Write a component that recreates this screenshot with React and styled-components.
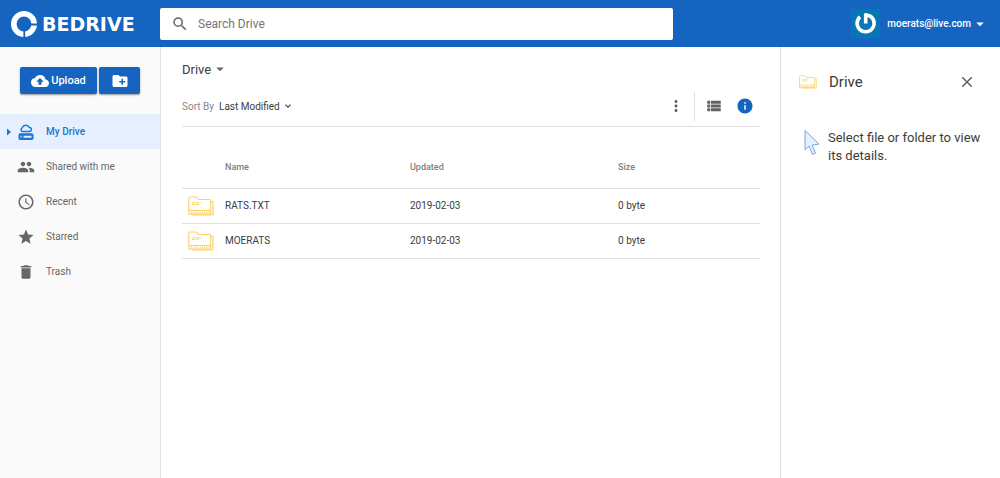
import React, { useState } from "react";
import styled, { createGlobalStyle } from "styled-components";
import {
  MdSearch,
  MdBackup,
  MdCreateNewFolder,
  MdPeople,
  MdAccessTime,
  MdStar,
  MdDelete,
  MdMoreVert,
  MdViewList,
  MdInfo,
  MdClose,
  MdArrowDropDown,
  MdExpandMore,
} from "react-icons/md";

const GlobalStyle = createGlobalStyle`
  * {
    box-sizing: border-box;
  }
  body {
    margin: 0;
    background-color: white;
    color: #3c3c3c;
    font-family: Roboto, "Liberation Sans", sans-serif;
    font-size: 10px;
  }
  button, input, select {
    font-family: inherit;
    color: inherit;
    border: none;
    padding: 0;
    background: none;
  }
  button {
    cursor: pointer;
  }
  svg {
    display: block;
    flex-shrink: 0;
  }
`;

const Page = styled.div`
  min-height: 100vh;
  display: flex;
  flex-direction: column;
`;

/* header */
const Header = styled.header`
  height: 47px;
  display: grid;
  grid-template-columns: 160px minmax(0, 513px) 1fr;
  align-items: center;
  background-color: #1565c0;
  color: white;
`;
const Logo = styled.a`
  display: flex;
  align-items: center;
  gap: 3px;
  padding-left: 11px;
  color: white;
  text-decoration: none;
  font-family: "DejaVu Sans", sans-serif;
  font-size: 19px;
  font-weight: bold;
  line-height: 24px;
`;
const SearchBox = styled.label`
  height: 32px;
  display: flex;
  align-items: center;
  gap: 9px;
  padding-left: 11px;
  background-color: white;
  border-radius: 2px;
  color: #666;
`;
const SearchInput = styled.input`
  flex: 1;
  min-width: 0;
  height: 100%;
  font-size: 12px;
  outline: none;
  &::placeholder {
    color: #757575;
    opacity: 1;
  }
`;
const UserButton = styled.button`
  justify-self: end;
  display: flex;
  align-items: center;
  margin-right: 11px;
  font-size: 10px;
  font-weight: 500;
  color: white;
`;
const UserName = styled.span`
  margin-left: 7px;
`;

/* body */
const Body = styled.div`
  flex: 1;
  display: grid;
  grid-template-columns: 161px minmax(0, 1fr) 220px;
`;
const Sidebar = styled.aside`
  background-color: #fafafa;
  border-right: 1px solid #e0e0e0;
`;
const Actions = styled.div`
  display: flex;
  gap: 2px;
  padding: 20px 20px;
`;
const ActionButton = styled.button`
  height: 27px;
  flex: ${(props) => (props.$wide ? "1" : "0 0 41px")};
  display: flex;
  align-items: center;
  justify-content: center;
  gap: 2px;
  border-radius: 2px;
  background-color: #1565c0;
  box-shadow: 0 1px 2px rgba(0, 0, 0, 0.4);
  color: white;
  font-size: 11px;
  font-weight: 500;
`;
const NavItem = styled.a`
  height: 35px;
  display: flex;
  align-items: center;
  padding-left: 5px;
  text-decoration: none;
  font-size: 10px;
  font-weight: ${(props) => (props.$active ? 500 : 400)};
  color: ${(props) => (props.$active ? "#1976d2" : "#666")};
  background-color: ${(props) => (props.$active ? "#e6effd" : "transparent")};
`;
const NavArrow = styled.span`
  width: 8px;
  margin-right: 4px;
`;
const NavLabel = styled.span`
  margin-left: 11px;
`;

const Content = styled.main`
  padding: 12px 20px 0 21px;
`;
const Breadcrumb = styled.button`
  height: 20px;
  display: flex;
  align-items: center;
  font-size: 13px;
`;
const Toolbar = styled.div`
  height: 48px;
  display: flex;
  align-items: center;
  justify-content: space-between;
  padding-top: 7px;
  border-bottom: 1px solid #e0e0e0;
`;
const Sort = styled.div`
  display: flex;
  align-items: center;
  gap: 5px;
`;
const SortLabel = styled.label`
  color: #8a8a8a;
`;
const SortSelect = styled.select`
  appearance: none;
  font-size: 10px;
`;
const SortField = styled.span`
  display: flex;
  align-items: center;
  gap: 2px;
`;
const Tools = styled.div`
  display: flex;
  align-items: center;
  color: #616161;
`;
const IconButton = styled.button`
  width: ${(props) => props.$width || 31}px;
  height: 28px;
  display: flex;
  align-items: center;
  justify-content: center;
  color: ${(props) => (props.$active ? "#1565c0" : "#616161")};
`;
const Divider = styled.span`
  width: 1px;
  height: 29px;
  margin-left: 3px;
  margin-right: 3px;
  background-color: #e0e0e0;
`;

const FileTable = styled.table`
  width: 100%;
  margin-top: 20px;
  border-collapse: collapse;
  table-layout: fixed;
  text-align: left;
  tr {
    border-bottom: 1px solid #e0e0e0;
  }
`;
const Th = styled.th`
  width: ${(props) => props.$width};
  height: 41px;
  padding: 0;
  font-size: 9px;
  font-weight: 500;
  color: #808080;
`;
const Td = styled.td`
  height: 35px;
  padding: 0;
  font-size: 10px;
`;
const IconCell = styled(Td)`
  padding-left: 6px;
`;

const Details = styled.aside`
  border-left: 1px solid #e0e0e0;
  padding: 23px 12px 0 18px;
`;
const DetailsHead = styled.div`
  height: 24px;
  display: flex;
  align-items: center;
  gap: 12px;
  padding-right: 12px;
`;
const DetailsTitle = styled.h2`
  flex: 1;
  margin: 0;
  font-size: 15px;
  font-weight: 400;
`;
const Hint = styled.div`
  display: flex;
  gap: 8px;
  margin-top: 35px;
  padding-left: 5px;
`;
const HintText = styled.p`
  margin: 0;
  font-size: 13px;
  line-height: 18px;
`;

const LogoMark = () => (
  <svg width="28" height="28" viewBox="0 0 28 28" fill="none" aria-hidden="true">
    <circle cx="13" cy="14" r="10.2" stroke="white" strokeWidth="5.600" />
    <path d="M17 14.500H28M13.300 18V28" stroke="#1565c0" strokeWidth="1.800" />
  </svg>
);

const Avatar = () => (
  <svg width="29" height="29" viewBox="0 0 29 29" fill="none" aria-hidden="true">
    <rect width="29" height="29" fill="#0577b5" />
    <path
      d="M9 7.900A8.500 8.500 0 1 0 18.800 6.900L14.700 5.800V14.500"
      stroke="white"
      strokeWidth="3.600"
      strokeLinejoin="round"
    />
  </svg>
);

const DriveIcon = () => (
  <svg width="18" height="18" viewBox="0 0 18 18" fill="none" aria-hidden="true">
    <path
      d="M5.200 8.600A2.200 2.200 0 0 1 5.200 4.800A3.900 3.900 0 0 1 12.300 4.500A2.100 2.100 0 0 1 13 8.600Z"
      stroke="#1976d2"
      strokeWidth="1.500"
    />
    <rect x="1.500" y="10.300" width="15" height="6.700" rx="1.800" fill="#1976d2" />
    <path d="M3.500 13.700H4.500M6.500 13.700H14.500" stroke="#e6effd" strokeWidth="2" />
  </svg>
);

const FolderIcon = ({ width = 26 }) => (
  <svg width={width} height={(width * 20) / 26} viewBox="0 0 26 20" fill="none" aria-hidden="true">
    <g stroke="#ffd269">
      <path d="M.8 17.500V2.200Q.8 1 2 1H7.500Q8.500 1 9.300 2L10.500 3.500H21.500Q22.700 3.500 22.700 4.700V18.200H1.500Q.8 18.200.8 17.500Z" strokeWidth="1.200" />
      <path d="M22.700 5.500H25V19H4" strokeWidth="1.200" />
      <path d="M1 14.500H22" strokeWidth="1.100" />
      <path d="M3 16.500H22" strokeWidth="2.200" strokeDasharray="1 1.200" />
      <path d="M4 6.800H13M4 8.600H7M8 8.600H11" strokeWidth="1" />
    </g>
  </svg>
);

const CursorIcon = () => (
  <svg width="16" height="26" viewBox="0 0 16 26" aria-hidden="true">
    <path
      d="M1 5V24.500L5 20.600L8.500 29L11.500 27.500L8.200 19.600L15 18.600Z"
      transform="translate(0 -3.500)"
      fill="#e3f0fd"
      stroke="#7ba6d8"
      strokeWidth="1"
      strokeLinejoin="round"
    />
  </svg>
);

const navItems = [
  { label: "My Drive", icon: <DriveIcon />, active: true },
  { label: "Shared with me", icon: <MdPeople size={18} /> },
  { label: "Recent", icon: <MdAccessTime size={18} /> },
  { label: "Starred", icon: <MdStar size={18} /> },
  { label: "Trash", icon: <MdDelete size={18} /> },
];

const files = [
  { name: "RATS.TXT", updated: "2019-02-03", size: "0 byte" },
  { name: "MOERATS", updated: "2019-02-03", size: "0 byte" },
];

const App = () => {
  const [query, setQuery] = useState("");

  return (
    <Page>
      <GlobalStyle />
      <Header>
        <Logo href="#">
          <LogoMark />
          BEDRIVE
        </Logo>
        <SearchBox>
          <MdSearch size={18} />
          <SearchInput
            type="text"
            aria-label="Search Drive"
            placeholder="Search Drive"
            value={query}
            onChange={(e) => setQuery(e.target.value)}
          />
        </SearchBox>
        <UserButton>
          <Avatar />
          <UserName>moerats@live.com</UserName>
          <MdArrowDropDown size={18} />
        </UserButton>
      </Header>
      <Body>
        <Sidebar>
          <Actions>
            <ActionButton $wide>
              <MdBackup size={18} />
              Upload
            </ActionButton>
            <ActionButton aria-label="New folder">
              <MdCreateNewFolder size={18} />
            </ActionButton>
          </Actions>
          <nav>
            {navItems.map((item) => (
              <NavItem key={item.label} href="#" $active={item.active}>
                <NavArrow>
                  {item.active && (
                    <svg width="8" height="8" viewBox="0 0 8 8" aria-hidden="true">
                      <path d="M2 0.500L6 4L2 7.500Z" fill="#1976d2" />
                    </svg>
                  )}
                </NavArrow>
                {item.icon}
                <NavLabel>{item.label}</NavLabel>
              </NavItem>
            ))}
          </nav>
        </Sidebar>
        <Content>
          <Breadcrumb>
            Drive
            <MdArrowDropDown size={18} color="#666" />
          </Breadcrumb>
          <Toolbar>
            <Sort>
              <SortLabel htmlFor="sort">Sort By</SortLabel>
              <SortField>
                <SortSelect id="sort">
                  <option>Last Modified</option>
                </SortSelect>
                <MdExpandMore size={12} />
              </SortField>
            </Sort>
            <Tools>
              <IconButton aria-label="More options">
                <MdMoreVert size={18} />
              </IconButton>
              <Divider />
              <IconButton aria-label="List view">
                <MdViewList size={18} />
              </IconButton>
              <IconButton aria-label="Toggle details" $active>
                <MdInfo size={18} />
              </IconButton>
            </Tools>
          </Toolbar>
          <FileTable>
            <thead>
              <tr>
                <Th $width="43px" />
                <Th $width="32%">Name</Th>
                <Th $width="36%">Updated</Th>
                <Th>Size</Th>
              </tr>
            </thead>
            <tbody>
              {files.map((file) => (
                <tr key={file.name}>
                  <IconCell>
                    <FolderIcon />
                  </IconCell>
                  <Td>{file.name}</Td>
                  <Td>{file.updated}</Td>
                  <Td>{file.size}</Td>
                </tr>
              ))}
            </tbody>
          </FileTable>
        </Content>
        <Details>
          <DetailsHead>
            <FolderIcon width={18} />
            <DetailsTitle>Drive</DetailsTitle>
            <IconButton aria-label="Close details" $width={18}>
              <MdClose size={18} />
            </IconButton>
          </DetailsHead>
          <Hint>
            <CursorIcon />
            <HintText>Select file or folder to view its details.</HintText>
          </Hint>
        </Details>
      </Body>
    </Page>
  );
};

export default App;
